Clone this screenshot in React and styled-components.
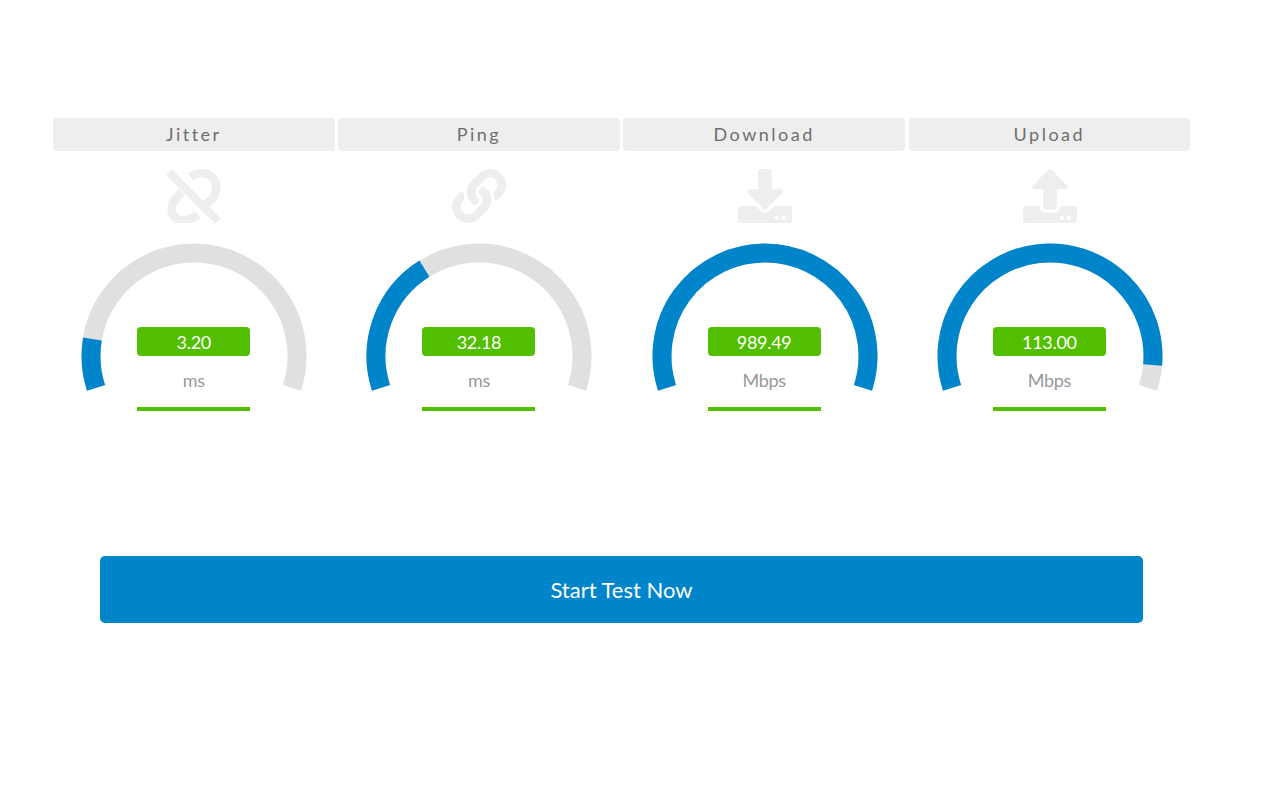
import React from 'react'
import styled, { createGlobalStyle } from 'styled-components'
import { FaLink, FaDownload, FaUpload } from 'react-icons/fa'

const GlobalStyle = createGlobalStyle`
  html, body {
    margin: 0;
    padding: 0;
    background: #fff;
    font-family: 'Lato', 'Liberation Sans', sans-serif;
  }
`

//STYLE
const Page = styled.div`
  width: 1137px;
  margin-left: 53px;
  padding-top: 118px;
`
const Meters = styled.div`
  display: grid;
  grid-template-columns: repeat(4, 281.6px);
  column-gap: 3.6px;
`
const Meter = styled.div`
  display: flex;
  flex-direction: column;
  align-items: center;
`
const Title = styled.div`
  width: 100%;
  height: 33px;
  line-height: 33px;
  background: #eeeeee;
  border-radius: 4px;
  text-align: center;
  font-size: 18px;
  letter-spacing: 2.5px;
  color: #6e6e6e;
`
const IconBox = styled.div`
  width: 54px;
  height: 54px;
  margin: 18px 0 0 1px;
  color: #eeeeee;
  svg {
    display: block;
    width: 54px;
    height: 54px;
  }
`
const Dial = styled.div`
  position: relative;
  width: 226px;
  height: 168px;
  margin: 20px 0 0 1px;
  svg {
    display: block;
  }
`
const Readout = styled.div`
  position: absolute;
  top: 84px;
  left: 56px;
  width: 113px;
  display: flex;
  flex-direction: column;
  align-items: center;
`
const Value = styled.div`
  width: 100%;
  height: 29px;
  line-height: 30px;
  background: #52be00;
  border-radius: 4px;
  text-align: center;
  font-size: 18px;
  letter-spacing: -0.3px;
  color: #ffffff;
`
const Unit = styled.div`
  margin-top: 13px;
  height: 22px;
  line-height: 22px;
  font-size: 18px;
  letter-spacing: -0.3px;
  color: #999999;
`
const Bar = styled.div`
  width: 100%;
  height: 4px;
  margin-top: 16px;
  background: #52be00;
`
const StartButton = styled.button`
  display: block;
  width: 1043px;
  height: 67px;
  margin: 145px 0 0 47px;
  padding: 0;
  border: 0;
  border-radius: 5px;
  background: #0085cb;
  font-family: inherit;
  font-size: 22px;
  color: #ffffff;
`

//GAUGE
const CX = 113
const CY = 113
const R = 103
const SWEEP = 216

const point = deg => {
  const rad = ((deg - 18) * Math.PI) / 180
  return [CX - R * Math.cos(rad), CY - R * Math.sin(rad)]
}
const arc = (from, to) => {
  const [x1, y1] = point(from)
  const [x2, y2] = point(to)
  return `M${x1} ${y1} A${R} ${R} 0 ${to - from > 180 ? 1 : 0} 1 ${x2} ${y2}`
}

const Gauge = ({ sweep }) => (
  <svg width="226" height="150" viewBox="0 0 226 150">
    <path d={arc(0, SWEEP)} fill="none" stroke="#e0e0e0" strokeWidth="19" />
    <path d={arc(0, sweep)} fill="none" stroke="#0085cb" strokeWidth="19" />
  </svg>
)

const BrokenLink = () => (
  <svg viewBox="0 0 54 54" fill="none" stroke="currentColor" strokeWidth="8.5">
    <path d="M24 8C31 2 40 3 45.5 8.5C51 14 50.5 23 45 29.5L38 36" />
    <path d="M15 23L8.5 30C3 36 3.5 44.5 8.5 49C14 53.5 24 51 31 45.5" />
    <path d="M2 3L51 52" strokeWidth="8" />
  </svg>
)

const meters = [
  { title: 'Jitter', icon: <BrokenLink />, sweep: 27.5, value: '3.20', unit: 'ms' },
  { title: 'Ping', icon: <FaLink />, sweep: 76, value: '32.18', unit: 'ms' },
  { title: 'Download', icon: <FaDownload />, sweep: 216, value: '989.49', unit: 'Mbps' },
  { title: 'Upload', icon: <FaUpload />, sweep: 203, value: '113.00', unit: 'Mbps' },
]

//MAIN COMPONENT
const App = () => {
  return (
    <>
      <GlobalStyle />
      <Page>
        <Meters>
          {meters.map(m => (
            <Meter key={m.title}>
              <Title>{m.title}</Title>
              <IconBox>{m.icon}</IconBox>
              <Dial>
                <Gauge sweep={m.sweep} />
                <Readout>
                  <Value>{m.value}</Value>
                  <Unit>{m.unit}</Unit>
                  <Bar />
                </Readout>
              </Dial>
            </Meter>
          ))}
        </Meters>
        <StartButton>Start Test Now</StartButton>
      </Page>
    </>
  )
}
export default App
